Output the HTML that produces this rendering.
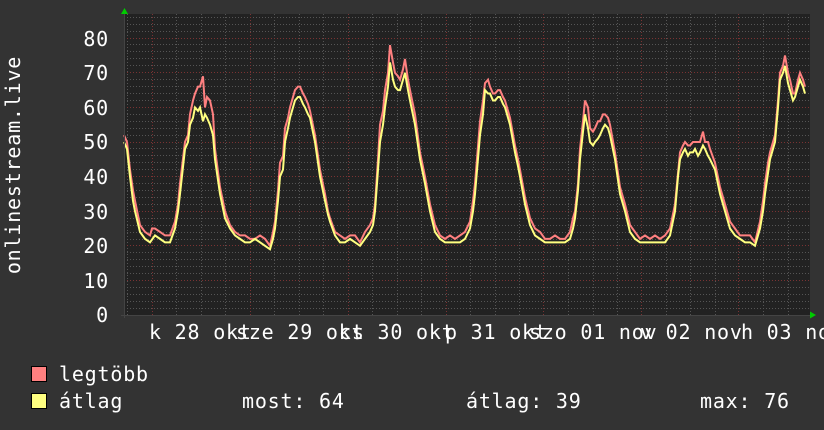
<!DOCTYPE html>
<html><head><meta charset="utf-8"><style>
html,body{margin:0;padding:0}
body{width:824px;height:430px;background:#333333;position:relative;overflow:hidden;font-family:"DejaVu Sans Mono","Liberation Mono",monospace;color:#fff}
.t{position:absolute;font-size:20px;letter-spacing:0.8px;white-space:pre;line-height:20px}
.yl{position:absolute;right:715px;font-size:20px;letter-spacing:0.8px;line-height:20px;text-align:right}
.sq{position:absolute;width:14px;height:14px;border:1px solid #000}
</style></head><body>
<svg width="824" height="430" style="position:absolute;left:0;top:0">
<rect x="124" y="14" width="686" height="301" fill="#222222"/>
<g stroke="#555" stroke-width="1" stroke-dasharray="1,2" shape-rendering="crispEdges">
<path d="M124 308.5H810M124 301.5H810M124 294.5H810M124 287.5H810M124 273.5H810M124 266.5H810M124 259.5H810M124 252.5H810M124 239.5H810M124 232.5H810M124 225.5H810M124 218.5H810M124 204.5H810M124 197.5H810M124 190.5H810M124 183.5H810M124 169.5H810M124 162.5H810M124 155.5H810M124 148.5H810M124 135.5H810M124 128.5H810M124 121.5H810M124 114.5H810M124 100.5H810M124 93.5H810M124 86.5H810M124 79.5H810M124 65.5H810M124 58.5H810M124 51.5H810M124 44.5H810M124 31.5H810M124 24.5H810M124 17.5H810"/>
<path d="M127.5 14V315M176.5 14V315M201.5 14V315M225.5 14V315M274.5 14V315M299.5 14V315M323.5 14V315M372.5 14V315M397.5 14V315M421.5 14V315M470.5 14V315M495.5 14V315M519.5 14V315M568.5 14V315M593.5 14V315M617.5 14V315M666.5 14V315M690.5 14V315M715.5 14V315M763.5 14V315M788.5 14V315"/>
</g>
<g stroke="#7a3333" stroke-width="1" stroke-dasharray="1,2" shape-rendering="crispEdges">
<path d="M124 280.5H810M124 245.5H810M124 211.5H810M124 176.5H810M124 142.5H810M124 107.5H810M124 72.5H810M124 38.5H810"/>
<path d="M152.5 14V315M250.5 14V315M348.5 14V315M446.5 14V315M543.5 14V315M641.5 14V315M738.5 14V315"/>
</g>
<g transform="translate(0,315) scale(1,-3.46)" fill="none" stroke-width="2" stroke-linejoin="miter">
<polyline vector-effect="non-scaling-stroke" stroke="#ff8080" points="124,52 127,50 130,42 133,36 135,33 140,26 145,24 150,23 152,25 155,25 160,24 165,23 170,23 175,27 178,32 180,38 185,50 188,52 190,58 193,62 195,64 198,66 200,66 203,69 205,60 207,63 210,62 213,58 215,48 220,37 225,30 230,26 235,24 240,23 245,23 250,22 255,22 260,23 265,22 270,20 273,24 275,27 278,36 280,44 283,46 285,54 288,57 290,60 293,63 295,65 298,66 300,66 303,64 305,63 308,61 310,59 315,52 320,42 325,35 328,30 330,28 335,24 340,23 345,22 350,23 355,23 360,21 365,24 370,26 373,28 375,32 378,45 380,55 383,59 385,65 388,70 390,78 393,73 395,70 398,69 400,68 403,71 405,74 408,68 410,65 415,58 420,47 425,40 430,32 435,26 440,23 445,22 450,23 455,22 460,23 465,24 470,27 473,33 475,38 480,56 483,62 485,67 488,68 490,66 493,64 495,64 498,65 500,65 503,63 505,62 508,59 510,57 515,49 518,45 520,42 525,34 530,28 535,25 540,24 545,22 550,22 555,23 560,22 565,22 570,24 573,28 575,30 578,38 580,48 583,56 585,62 588,60 590,54 593,53 595,54 598,56 600,56 603,58 605,58 608,57 610,55 615,47 620,37 625,32 630,26 635,24 640,22 645,23 650,22 655,23 660,22 665,23 670,25 675,32 678,41 680,47 683,49 685,50 688,49 690,49 693,50 695,50 698,50 700,50 703,53 705,50 708,50 710,48 715,44 720,37 725,32 730,27 735,25 740,23 745,23 750,23 755,21 760,27 763,33 765,38 768,44 770,47 773,50 775,52 778,62 780,70 783,72 785,75 788,70 790,68 793,64 795,64 798,68 800,70 803,68 805,66"/>
<polyline vector-effect="non-scaling-stroke" stroke="#ffff80" points="124,50 127,48 130,40 133,33 135,30 140,24 145,22 150,21 155,23 160,22 165,21 170,21 175,25 178,30 180,35 185,48 188,50 190,55 193,57 195,60 198,59 200,60 203,56 205,58 207,57 210,55 213,52 215,45 220,35 225,28 230,25 235,23 240,22 245,21 250,21 255,22 260,21 265,20 270,19 273,22 275,25 278,33 280,40 283,42 285,50 288,54 290,57 293,60 295,62 298,63 300,63 303,61 305,60 308,58 310,57 315,50 320,40 325,33 328,29 330,27 335,23 340,21 345,21 350,22 355,21 360,20 365,22 370,24 373,26 375,30 378,42 380,50 383,55 385,60 388,66 390,73 393,68 395,66 398,65 400,65 403,68 405,70 408,65 410,62 415,55 420,45 425,38 430,30 435,24 440,22 445,21 450,21 455,21 460,21 465,22 470,25 473,30 475,35 480,52 483,58 485,65 488,64 490,64 493,62 495,62 498,63 500,63 503,61 505,60 508,57 510,55 515,47 518,43 520,40 525,32 530,26 535,23 540,22 545,21 550,21 555,21 560,21 565,21 570,22 573,25 575,28 578,36 580,45 583,53 585,58 588,54 590,50 593,49 595,50 598,51 600,52 603,54 605,55 608,54 610,52 615,45 620,35 625,30 630,24 635,22 640,21 645,21 650,21 655,21 660,21 665,21 670,23 675,30 678,40 680,45 683,47 685,48 688,46 690,47 693,47 695,48 698,46 700,47 703,49 705,48 708,46 710,45 715,42 720,35 725,30 730,25 735,23 740,22 745,21 750,21 755,20 760,25 763,30 765,35 768,41 770,45 773,48 775,50 778,60 780,68 783,70 785,72 788,67 790,65 793,62 795,63 798,66 800,68 803,66 805,64"/>
</g>
<path d="M121 315.5H812" stroke="#444" stroke-width="1"/>
<path d="M124.5 12V318" stroke="#444" stroke-width="1"/>
<polygon points="121,14 124.5,8 128,14" fill="#00cc00"/>
<polygon points="810,311.5 816,315 810,318.5" fill="#00cc00"/>
<text x="20" y="165" transform="rotate(-90 20 165)" text-anchor="middle" fill="#fff" font-family="DejaVu Sans Mono, Liberation Mono, monospace" font-size="20" letter-spacing="0.8">onlinestream.live</text>
</svg>
<div class="yl" style="top:29px">80</div>
<div class="yl" style="top:63px">70</div>
<div class="yl" style="top:98px">60</div>
<div class="yl" style="top:132px">50</div>
<div class="yl" style="top:167px">40</div>
<div class="yl" style="top:202px">30</div>
<div class="yl" style="top:236px">20</div>
<div class="yl" style="top:271px">10</div>
<div class="yl" style="top:305px">0</div>
<div class="t" style="left:149px;top:322px">k 28 okt</div>
<div class="t" style="left:236px;top:322px">sze 29 okt</div>
<div class="t" style="left:339px;top:322px">cs 30 okt</div>
<div class="t" style="left:445px;top:322px">p 31 okt</div>
<div class="t" style="left:529px;top:322px">szo 01 nov</div>
<div class="t" style="left:640px;top:322px">v 02 nov</div>
<div class="t" style="left:741px;top:322px">h 03 nov</div>
<div class="sq" style="left:31px;top:366px;background:#ff8080"></div>
<div class="sq" style="left:31px;top:393px;background:#ffff80"></div>
<div class="t" style="left:59px;top:364px">legtöbb</div>
<div class="t" style="left:59px;top:391px">átlag</div>
<div class="t" style="left:242px;top:391px">most: 64</div>
<div class="t" style="left:466px;top:391px">átlag: 39</div>
<div class="t" style="left:700px;top:391px">max: 76</div>
</body></html>
